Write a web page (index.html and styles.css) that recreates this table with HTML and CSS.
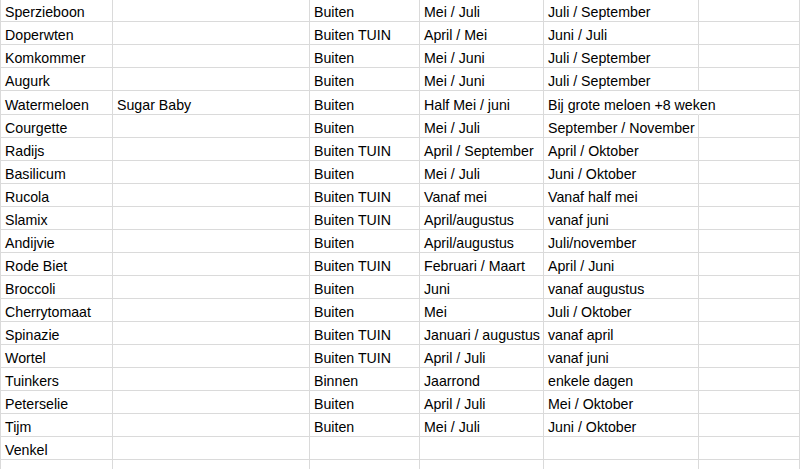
FILE: index.html
```html
<!DOCTYPE html>
<html lang="nl">
<head>
<meta charset="utf-8">
<title>Zaaikalender</title>
<link rel="stylesheet" href="styles.css">
</head>
<body>
<div class="sheet">
  <div class="row"><div class="cell">Sperzieboon</div><div class="cell"></div><div class="cell">Buiten</div><div class="cell">Mei / Juli</div><div class="cell">Juli / September</div><div class="cell"></div></div>
  <div class="row"><div class="cell">Doperwten</div><div class="cell"></div><div class="cell">Buiten TUIN</div><div class="cell">April / Mei</div><div class="cell">Juni / Juli</div><div class="cell"></div></div>
  <div class="row"><div class="cell">Komkommer</div><div class="cell"></div><div class="cell">Buiten</div><div class="cell">Mei / Juni</div><div class="cell">Juli / September</div><div class="cell"></div></div>
  <div class="row"><div class="cell">Augurk</div><div class="cell"></div><div class="cell">Buiten</div><div class="cell">Mei / Juni</div><div class="cell">Juli / September</div><div class="cell"></div></div>
  <div class="row"><div class="cell">Watermeloen</div><div class="cell">Sugar Baby</div><div class="cell">Buiten</div><div class="cell">Half Mei / juni</div><div class="cell spill">Bij grote meloen +8 weken</div><div class="cell"></div></div>
  <div class="row"><div class="cell">Courgette</div><div class="cell"></div><div class="cell">Buiten</div><div class="cell">Mei / Juli</div><div class="cell">September / November</div><div class="cell"></div></div>
  <div class="row"><div class="cell">Radijs</div><div class="cell"></div><div class="cell">Buiten TUIN</div><div class="cell">April / September</div><div class="cell">April / Oktober</div><div class="cell"></div></div>
  <div class="row"><div class="cell">Basilicum</div><div class="cell"></div><div class="cell">Buiten</div><div class="cell">Mei / Juli</div><div class="cell">Juni / Oktober</div><div class="cell"></div></div>
  <div class="row"><div class="cell">Rucola</div><div class="cell"></div><div class="cell">Buiten TUIN</div><div class="cell">Vanaf mei</div><div class="cell">Vanaf half mei</div><div class="cell"></div></div>
  <div class="row"><div class="cell">Slamix</div><div class="cell"></div><div class="cell">Buiten TUIN</div><div class="cell">April/augustus</div><div class="cell">vanaf juni</div><div class="cell"></div></div>
  <div class="row"><div class="cell">Andijvie</div><div class="cell"></div><div class="cell">Buiten</div><div class="cell">April/augustus</div><div class="cell">Juli/november</div><div class="cell"></div></div>
  <div class="row"><div class="cell">Rode Biet</div><div class="cell"></div><div class="cell">Buiten TUIN</div><div class="cell">Februari / Maart</div><div class="cell">April / Juni</div><div class="cell"></div></div>
  <div class="row"><div class="cell">Broccoli</div><div class="cell"></div><div class="cell">Buiten</div><div class="cell">Juni</div><div class="cell">vanaf augustus</div><div class="cell"></div></div>
  <div class="row"><div class="cell">Cherrytomaat</div><div class="cell"></div><div class="cell">Buiten</div><div class="cell">Mei</div><div class="cell">Juli / Oktober</div><div class="cell"></div></div>
  <div class="row"><div class="cell">Spinazie</div><div class="cell"></div><div class="cell">Buiten TUIN</div><div class="cell">Januari / augustus</div><div class="cell">vanaf april</div><div class="cell"></div></div>
  <div class="row"><div class="cell">Wortel</div><div class="cell"></div><div class="cell">Buiten TUIN</div><div class="cell">April / Juli</div><div class="cell">vanaf juni</div><div class="cell"></div></div>
  <div class="row"><div class="cell">Tuinkers</div><div class="cell"></div><div class="cell">Binnen</div><div class="cell">Jaarrond</div><div class="cell">enkele dagen</div><div class="cell"></div></div>
  <div class="row"><div class="cell">Peterselie</div><div class="cell"></div><div class="cell">Buiten</div><div class="cell">April / Juli</div><div class="cell">Mei / Oktober</div><div class="cell"></div></div>
  <div class="row"><div class="cell">Tijm</div><div class="cell"></div><div class="cell">Buiten</div><div class="cell">Mei / Juli</div><div class="cell">Juni / Oktober</div><div class="cell"></div></div>
  <div class="row"><div class="cell">Venkel</div><div class="cell"></div><div class="cell"></div><div class="cell"></div><div class="cell"></div><div class="cell"></div></div>
  <div class="row"><div class="cell"></div><div class="cell"></div><div class="cell"></div><div class="cell"></div><div class="cell"></div><div class="cell"></div></div>
</div>
</body>
</html>
```
FILE: styles.css
```css
html, body {
  margin: 0;
  padding: 0;
  background: #ffffff;
  overflow: hidden;
}
.sheet {
  margin-top: -0.77px;
  border-left: 1px solid #dadada;
  font-family: "Liberation Sans", Arial, sans-serif;
  font-size: 14.2px;
  color: #000000;
}
.row {
  display: grid;
  grid-template-columns: 112px 197px 110px 124px 155px 1fr;
  height: 23.07px;
}
.cell {
  box-sizing: border-box;
  display: flex;
  align-items: flex-end;
  padding: 0 4px 1px 4px;
  line-height: 16px;
  white-space: nowrap;
  overflow: hidden;
  border-right: 1px solid #dadada;
  border-bottom: 1px solid #dadada;
}
.cell.spill {
  overflow: visible;
  border-right-color: transparent;
}
```
